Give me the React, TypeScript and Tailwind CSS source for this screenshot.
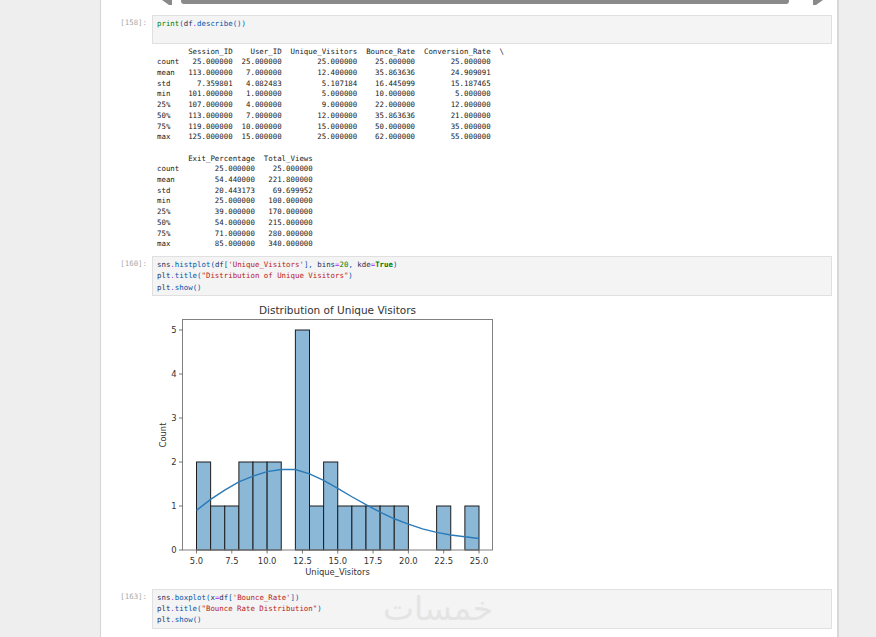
const rows1: string[][] = [
  ["count", "25.000000", "25.000000", "25.000000", "25.000000", "25.000000"],
  ["mean", "113.000000", "7.000000", "12.400000", "35.863636", "24.909091"],
  ["std", "7.359801", "4.082483", "5.107184", "16.445099", "15.187465"],
  ["min", "101.000000", "1.000000", "5.000000", "10.000000", "5.000000"],
  ["25%", "107.000000", "4.000000", "9.000000", "22.000000", "12.000000"],
  ["50%", "113.000000", "7.000000", "12.000000", "35.863636", "21.000000"],
  ["75%", "119.000000", "10.000000", "15.000000", "50.000000", "35.000000"],
  ["max", "125.000000", "15.000000", "25.000000", "62.000000", "55.000000"],
];

const rows2: string[][] = [
  ["count", "25.000000", "25.000000"],
  ["mean", "54.440000", "221.800000"],
  ["std", "20.443173", "69.699952"],
  ["min", "25.000000", "100.000000"],
  ["25%", "39.000000", "170.000000"],
  ["50%", "54.000000", "215.000000"],
  ["75%", "71.000000", "280.000000"],
  ["max", "85.000000", "340.000000"],
];

const formatRow = (row: string[], widths: number[]) =>
  row.map((cell, i) => (i === 0 ? cell.padEnd(widths[0]) : cell.padStart(widths[i]))).join("");

const widths1 = [5, 12, 11, 17, 13, 17];
const widths2 = [5, 17, 13];

const describeOutput = [
  formatRow(["", "Session_ID", "User_ID", "Unique_Visitors", "Bounce_Rate", "Conversion_Rate"], widths1) + "  \\",
  ...rows1.map((r) => formatRow(r, widths1)),
  " ",
  formatRow(["", "Exit_Percentage", "Total_Views"], widths2),
  ...rows2.map((r) => formatRow(r, widths2)),
].join("\n");

// Histogram data, one bin per unit starting at 5
const counts = [2, 1, 1, 2, 2, 2, 0, 5, 1, 2, 1, 1, 1, 1, 1, 0, 0, 1, 0, 1];
const kde = [0.9, 1.15, 1.36, 1.55, 1.68, 1.78, 1.83, 1.83, 1.73, 1.58, 1.4, 1.21, 1.03, 0.86, 0.71, 0.59, 0.48, 0.4, 0.34, 0.3, 0.26];

const px = (v: number) => 196.5 + (v - 5) * 14.125;
const py = (v: number) => 550 - v * 44;

const Name = ({ children }: { children: string }) => <span className="text-[#1f2f57]">{children}</span>;
const Attr = ({ children }: { children: string }) => <span className="text-[#0055aa]">{children}</span>;
const Str = ({ children }: { children: string }) => <span className="text-[#ba2121]">{children}</span>;
const Op = ({ children }: { children: string }) => <span className="text-[#aa22ff]">{children}</span>;
const Num = ({ children }: { children: string }) => <span className="text-[#008000]">{children}</span>;
const Punct = ({ children }: { children: string }) => <span className="text-[#0055aa]">{children}</span>;

const Cell = ({ prompt, children }: { prompt: string; children: React.ReactNode }) => (
  <div className="flex">
    <div className="w-[51px] shrink-0 pr-[5px] pt-[2px] text-right text-[#a8a8a8] leading-[11.3px]">{prompt}</div>
    <pre className="flex-1 border border-[#e0e0e0] bg-[#f4f4f4] py-[2px] pl-[4px] font-[inherit] leading-[11.3px] text-[#212121]">
      {children}
    </pre>
  </div>
);

const Chart = () => (
  <svg className="ml-[51px] mt-[1px] block" width="345" height="285" viewBox="152 297 345 285">
    <g fill="#8cb8d8" stroke="#1c1c1c" strokeWidth="1">
      {counts.map((c, i) =>
        c > 0 ? <rect key={i} x={px(5 + i)} y={py(c)} width={14.125} height={c * 44} /> : null
      )}
    </g>
    <polyline
      points={kde.map((v, i) => `${px(5 + i)},${py(v)}`).join(" ")}
      fill="none"
      stroke="#2a7ab8"
      strokeWidth="1.4"
    />
    <rect x="182.5" y="319.5" width="310" height="230.5" fill="none" stroke="#808080" strokeWidth="1" />
    <g stroke="#555" strokeWidth="0.8">
      {[5, 7.5, 10, 12.5, 15, 17.5, 20, 22.5, 25].map((t) => (
        <line key={t} x1={px(t)} x2={px(t)} y1="550" y2="553.5" />
      ))}
      {[0, 1, 2, 3, 4, 5].map((t) => (
        <line key={t} x1="179" x2="182.5" y1={py(t)} y2={py(t)} />
      ))}
    </g>
    <g fill="#333333" fontFamily="'DejaVu Sans', sans-serif" fontSize="8.4">
      {[5, 7.5, 10, 12.5, 15, 17.5, 20, 22.5, 25].map((t) => (
        <text key={t} x={px(t)} y="563.5" textAnchor="middle">
          {t.toFixed(1)}
        </text>
      ))}
      {[0, 1, 2, 3, 4, 5].map((t) => (
        <text key={t} x="176.5" y={py(t) + 3} textAnchor="end">
          {t}
        </text>
      ))}
      <text x="337.5" y="575" textAnchor="middle">
        Unique_Visitors
      </text>
      <text x="165.5" y="435" textAnchor="middle" transform="rotate(-90 165.5 435)">
        Count
      </text>
      <text x="337.5" y="314" textAnchor="middle" fontSize="10.5">
        Distribution of Unique Visitors
      </text>
    </g>
  </svg>
);

const App = () => {
  return (
    <div className="relative h-[637px] overflow-hidden bg-[#eeeeee] font-['DejaVu_Sans_Mono',monospace] text-[7.4px]">
      <div className="ml-[100px] h-full w-[739px] border-l border-r-2 border-l-[#d4d4d4] border-r-[#d8d8d8] bg-white pr-[5px]">
        {/* clipped horizontal scrollbar of the frame above */}
        <div className="ml-[51px] flex h-[15px] items-start">
          <svg className="ml-[10px]" width="10" height="5" viewBox="0 0 10 5">
            <polygon points="0,0 10,0 10,5 7,5" fill="#8a8a8a" />
          </svg>
          <div className="ml-[9px] h-[4px] w-[608px] rounded-b-[3px] bg-[#8a8a8a]" />
          <svg className="ml-[24px]" width="10" height="5" viewBox="0 0 10 5">
            <polygon points="0,0 10,0 3,5 0,5" fill="#8a8a8a" />
          </svg>
        </div>

        <Cell prompt="[158]:">
          <span className="text-[#008000]">print</span>
          <Punct>(</Punct>
          <Name>df</Name>
          <Op>.</Op>
          <Attr>describe</Attr>
          <Punct>())</Punct>
          {"\n "}
        </Cell>

        <pre className="ml-[56px] mt-[3px] font-[inherit] leading-[10.7px] text-[#1a1a1a]">{describeOutput}</pre>

        <div className="mt-[6px]">
          <Cell prompt="[160]:">
            <Name>sns</Name>
            <Op>.</Op>
            <Attr>histplot</Attr>
            <Punct>(</Punct>
            <Name>df</Name>
            <Punct>[</Punct>
            <Str>'Unique_Visitors'</Str>
            <Punct>],</Punct> <Name>bins</Name>
            <Op>=</Op>
            <Num>20</Num>
            <Punct>,</Punct> <Name>kde</Name>
            <Op>=</Op>
            <span className="font-bold text-[#008000]">True</span>
            <Punct>)</Punct>
            {"\n"}
            <Name>plt</Name>
            <Op>.</Op>
            <Attr>title</Attr>
            <Punct>(</Punct>
            <Str>"Distribution of Unique Visitors"</Str>
            <Punct>)</Punct>
            {"\n"}
            <Name>plt</Name>
            <Op>.</Op>
            <Attr>show</Attr>
            <Punct>()</Punct>
          </Cell>
        </div>

        <Chart />

        <div className="mt-[7px]">
          <Cell prompt="[163]:">
            <Name>sns</Name>
            <Op>.</Op>
            <Attr>boxplot</Attr>
            <Punct>(</Punct>
            <Name>x</Name>
            <Op>=</Op>
            <Name>df</Name>
            <Punct>[</Punct>
            <Str>'Bounce_Rate'</Str>
            <Punct>])</Punct>
            {"\n"}
            <Name>plt</Name>
            <Op>.</Op>
            <Attr>title</Attr>
            <Punct>(</Punct>
            <Str>"Bounce Rate Distribution"</Str>
            <Punct>)</Punct>
            {"\n"}
            <Name>plt</Name>
            <Op>.</Op>
            <Attr>show</Attr>
            <Punct>()</Punct>
          </Cell>
        </div>
      </div>

      {/* site watermark */}
      <div className="absolute left-[383px] top-[589px] font-['DejaVu_Sans',sans-serif] text-[33px] leading-[40px] text-[#e4e4e4]" dir="rtl">
        خمسات
      </div>
    </div>
  );
};

export default App;
